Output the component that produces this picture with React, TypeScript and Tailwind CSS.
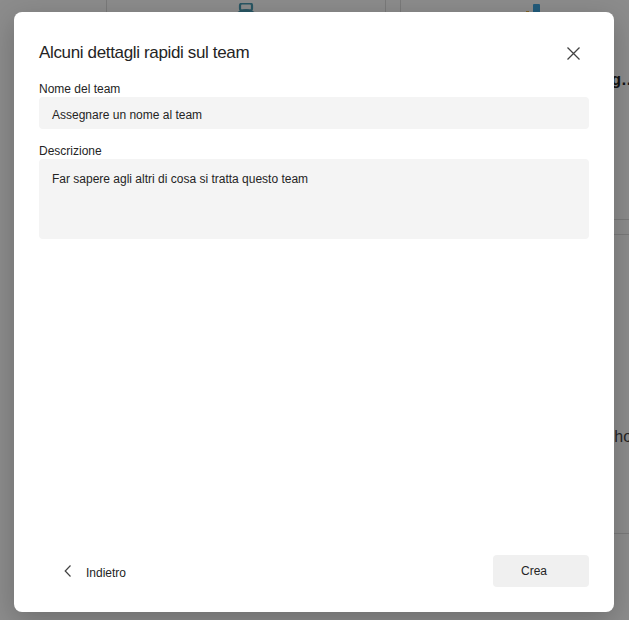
import { ReactNode } from "react";

// cards of the template gallery that sits behind the dialog
const TemplateCard = ({
	icon,
	title,
	lines,
	className,
}: {
	icon?: ReactNode;
	title?: string;
	lines?: string[];
	className: string;
}) => (
	<div className={`flex flex-col rounded-md border border-[#dedede] bg-white px-5 ${className}`}>
		<div className="flex h-10 items-start justify-center">{icon}</div>
		{title && (
			<h3 className="mt-[25px] whitespace-nowrap text-base font-bold leading-6 text-[#242424]">
				{title}
			</h3>
		)}
		{lines && (
			<div className="mt-4 text-base leading-[22px] tracking-[0.12px] text-[#424242]">
				{lines.map((l) => (
					<p key={l} className="whitespace-nowrap">
						{l}
					</p>
				))}
			</div>
		)}
	</div>
);

const BagIcon = () => (
	<svg width="30" height="34" viewBox="0 0 30 34">
		<rect x="9" y="0.5" width="12" height="7" rx="2" fill="none" stroke="#4c9db4" strokeWidth="2.2" />
		<circle cx="15" cy="19" r="13" fill="#4c9db4" />
	</svg>
);

const ChartIcon = () => (
	<svg width="40" height="34" viewBox="0 0 40 34">
		<rect x="2" y="12" width="3" height="20" fill="#d6594c" />
		<rect x="6" y="8" width="3" height="24" fill="#e8b54a" />
		<rect x="13" y="1" width="7" height="31" rx="1" fill="#3ea6e0" />
	</svg>
);

const Gallery = () => (
	<div className="ml-[106px] -mt-10 grid w-max grid-cols-[repeat(2,280px)] gap-x-[14px] gap-y-[14px]">
		<TemplateCard className="h-[260px] pt-[42px]" icon={<BagIcon />} title="Gestire un progetto" />
		<TemplateCard className="h-[260px] pt-[42px]" icon={<ChartIcon />} title="Pianificazione dei meeting…" />
		<TemplateCard className="h-[300px]" />
		<TemplateCard
			className="h-[300px] pt-5"
			title="Evento"
			lines={[
				"Un modello pronto per",
				"riunire le persone",
				"e condividere idee.",
				"Crea e organizza un workshop",
			]}
		/>
	</div>
);

const Field = ({ label, placeholder, tall }: { label: string; placeholder: string; tall?: boolean }) => (
	<div className="flex flex-col">
		<label className="text-xs leading-4 text-[#242424]">{label}</label>
		<div
			className={`rounded bg-[#f4f4f4] pl-[13px] text-xs leading-4 text-[#242424] ${
				tall ? "h-20 pt-3" : "h-8 pt-[10px]"
			}`}
		>
			{placeholder}
		</div>
	</div>
);

export default function App() {
	return (
		<div className="relative h-[620px] w-full overflow-hidden bg-white font-['Liberation_Sans',Arial,sans-serif]">
			<Gallery />

			{/* dimmed backdrop */}
			<div className="absolute inset-0 bg-black/45" />

			<div className="absolute inset-0 pl-[14px] pt-[12px]">
				<div className="flex h-[600px] w-[600px] flex-col rounded-lg bg-white px-[25px] pb-[25px] pt-[25px] shadow-[0_8px_28px_rgba(0,0,0,0.22)]">
					<div className="flex h-8 items-center justify-between">
						<h2 className="text-[17px] leading-6 tracking-[-0.35px] text-[#242424]">
							Alcuni dettagli rapidi sul team
						</h2>
						<button className="flex h-8 w-8 items-center justify-center" aria-label="Chiudi">
							<svg width="13" height="13" viewBox="0 0 13 13">
								<path d="M0.5 0.5 L12.5 12.5 M12.5 0.5 L0.5 12.5" stroke="#424242" strokeWidth="1.3" />
							</svg>
						</button>
					</div>

					<div className="mt-3 flex flex-col gap-[14px]">
						<Field label="Nome del team" placeholder="Assegnare un nome al team" />
						<Field
							label="Descrizione"
							placeholder="Far sapere agli altri di cosa si tratta questo team"
							tall
						/>
					</div>

					<div className="mt-auto flex items-center justify-between">
						<button className="flex h-8 items-center pl-[25px] text-xs text-[#242424]">
							<svg width="8" height="12" viewBox="0 0 8 12">
								<path d="M6.5 0.5 L1.2 6 L6.5 11.5" fill="none" stroke="#424242" strokeWidth="1.2" />
							</svg>
							<span className="ml-[14px] pt-1">Indietro</span>
						</button>
						<button className="h-8 w-24 rounded bg-[#f0f0f0] pl-7 text-left text-xs text-[#242424]">
							Crea
						</button>
					</div>
				</div>
			</div>
		</div>
	);
}
